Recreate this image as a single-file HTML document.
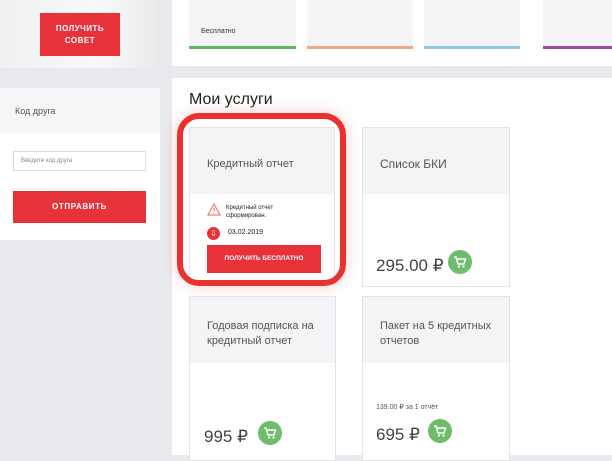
<!DOCTYPE html>
<html><head><meta charset="utf-8"><style>
*{margin:0;padding:0;box-sizing:border-box}
body{width:612px;height:455px;overflow:hidden;background:#e9eaee;font-family:"Liberation Sans",sans-serif;position:relative;color:#444}
.a{position:absolute}
.card{position:absolute;background:#fff;border:1px solid #e4e4e8}
.card .h{position:absolute;left:0;right:0;top:0;background:#f4f4f6}
.card .t{position:absolute;left:17px;font-size:11px;color:#555;line-height:15px}
.price{position:absolute;font-size:17px;color:#444}
.cart{position:absolute;width:24px;height:24px;border-radius:50%;background:#6dbd6d}
.cart svg{position:absolute;left:5px;top:5px}
</style></head><body>
<!-- left photo -->
<div class="a" style="left:0;top:0;width:160px;height:68px;background:linear-gradient(90deg,#eef0f2,#f8f9fa 60%,#e8eaec)"></div>
<div class="a" style="left:40px;top:13px;width:80px;height:43px;background:#e8323a;color:#fff;font-size:8px;font-weight:bold;text-align:center;line-height:12px;padding-top:10px;letter-spacing:.5px">ПОЛУЧИТЬ<br>СОВЕТ</div>
<div class="a" style="left:0;top:88px;width:160px;height:45px;background:#f6f6f8;font-size:9px;color:#555;padding:18px 0 0 15px">Код друга</div>
<div class="a" style="left:0;top:133px;width:160px;height:107px;background:#fff"></div>
<div class="a" style="left:13px;top:151px;width:133px;height:20px;border:1px solid #ddd;background:#fff;font-size:6px;color:#888;padding:6px 0 0 7px">Введите код друга</div>
<div class="a" style="left:13px;top:191px;width:133px;height:32px;background:#e8323a;color:#fff;font-size:8px;font-weight:bold;text-align:center;line-height:32px;letter-spacing:.6px">ОТПРАВИТЬ</div>
<!-- top panel -->
<div class="a" style="left:172px;top:0;width:440px;height:66px;background:#fff"></div>
<div class="a" style="left:189px;top:0;width:107px;height:48px;background:#f4f4f6;border-bottom:3px solid #5cb85c;font-size:7px;color:#333;padding:28px 0 0 12px;height:49px">Бесплатно</div>
<div class="a" style="left:307px;top:0;width:106px;height:49px;background:#f4f4f6;border-bottom:3px solid #f0a882"></div>
<div class="a" style="left:424px;top:0;width:96px;height:49px;background:#f4f4f6;border-bottom:3px solid #8cc8e0"></div>
<div class="a" style="left:543px;top:0;width:69px;height:49px;background:#f4f4f6;border-bottom:3px solid #9b4f9b"></div>
<!-- main panel -->
<div class="a" style="left:172px;top:78px;width:440px;height:377px;background:#fff"></div>
<div class="a" style="left:189px;top:91px;font-size:16px;color:#222">Мои услуги</div>
<!-- card1 -->
<div class="card" style="left:189px;top:127px;width:146px;height:157px"><div class="h" style="height:66px"></div>
<div class="t" style="top:29px">Кредитный отчет</div>
<svg class="a" style="left:17px;top:75px" width="14" height="13" viewBox="0 0 14 13"><path d="M7 1L13 12H1Z" fill="none" stroke="#e8806a" stroke-width="1.2"/><path d="M7 5v3.5M7 10v.8" stroke="#e8806a" stroke-width="1.2"/></svg>
<div class="a" style="left:36px;top:76px;font-size:6px;color:#222;line-height:8px">Кредитный отчет<br>сформирован.</div>
<div class="a" style="left:17px;top:99px;width:13px;height:13px;border-radius:50%;background:#e8323a;color:#fff;font-size:8px;text-align:center;line-height:13px">⇩</div>
<div class="a" style="left:38px;top:101px;font-size:7px;color:#222">03.02.2019</div>
<div class="a" style="left:17px;top:117px;width:114px;height:28px;background:#e8323a;color:#fff;font-size:6.5px;font-weight:bold;text-align:center;line-height:28px">ПОЛУЧИТЬ БЕСПЛАТНО</div>
</div>
<div class="a" style="left:177px;top:113px;width:169px;height:173px;border:6px solid #e8322f;border-radius:22px;box-shadow:0 0 14px rgba(232,50,47,.25)"></div>
<!-- card2 -->
<div class="card" style="left:362px;top:127px;width:148px;height:160px"><div class="h" style="height:66px"></div>
<div class="t" style="top:29px;font-size:12px">Список БКИ</div>
<div class="price" style="left:13px;top:128px">295.00 ₽</div>
<div class="cart" style="left:85px;top:122px"><svg width="14" height="14" viewBox="0 0 14 14"><path d="M1 2h2l2 7h6l1.5-5H4" fill="none" stroke="#fff" stroke-width="1.5"/><circle cx="6" cy="11.5" r="1.1" fill="#fff"/><circle cx="10.5" cy="11.5" r="1.1" fill="#fff"/></svg></div>
</div>
<!-- card3 -->
<div class="card" style="left:189px;top:296px;width:147px;height:165px"><div class="h" style="height:66px"></div>
<div class="t" style="top:22px">Годовая подписка на<br>кредитный отчет</div>
<div class="price" style="left:14px;top:130px">995 ₽</div>
<div class="cart" style="left:68px;top:124px"><svg width="14" height="14" viewBox="0 0 14 14"><path d="M1 2h2l2 7h6l1.5-5H4" fill="none" stroke="#fff" stroke-width="1.5"/><circle cx="6" cy="11.5" r="1.1" fill="#fff"/><circle cx="10.5" cy="11.5" r="1.1" fill="#fff"/></svg></div>
</div>
<!-- card4 -->
<div class="card" style="left:362px;top:296px;width:148px;height:165px"><div class="h" style="height:66px"></div>
<div class="t" style="top:22px">Пакет на 5 кредитных<br>отчетов</div>
<div class="a" style="left:13px;top:106px;font-size:7px;color:#555">139.00 ₽ за 1 отчёт</div>
<div class="price" style="left:13px;top:128px">695 ₽</div>
<div class="cart" style="left:65px;top:122px"><svg width="14" height="14" viewBox="0 0 14 14"><path d="M1 2h2l2 7h6l1.5-5H4" fill="none" stroke="#fff" stroke-width="1.5"/><circle cx="6" cy="11.5" r="1.1" fill="#fff"/><circle cx="10.5" cy="11.5" r="1.1" fill="#fff"/></svg></div>
</div>
</body></html>
